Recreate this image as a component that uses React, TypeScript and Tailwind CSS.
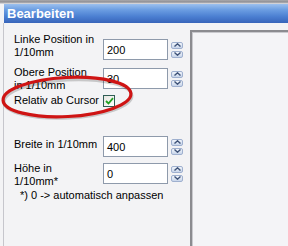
import React from "react";

function Spin() {
  return (
    <div className="ml-[3px] flex flex-col gap-[2px]">
      {["up", "down"].map((dir) => (
        <div
          key={dir}
          className="w-[12px] h-[7px] rounded-[2px] border border-[#9fb0cf] bg-linear-to-b from-[#f1f5fb] to-[#c8d5ea] flex items-center justify-center"
        >
          <svg width="7" height="4" viewBox="0 0 7 4">
            {dir === "up" ? (
              <path d="M0.5 3.5 L3.5 0.8 L6.5 3.5" fill="none" stroke="#3f5378" strokeWidth="1.4" />
            ) : (
              <path d="M0.5 0.5 L3.5 3.2 L6.5 0.5" fill="none" stroke="#3f5378" strokeWidth="1.4" />
            )}
          </svg>
        </div>
      ))}
    </div>
  );
}

function Field({ value }: { value: string }) {
  return (
    <div className="flex items-center">
      <div className="w-[65px] h-[21px] border border-[#8e9aab] bg-white flex items-center pl-[3px] pt-[1px]">
        {value}
      </div>
      <Spin />
    </div>
  );
}

export default function App() {
  return (
    <div className="relative w-[288px] h-[246px] overflow-hidden bg-[#f3f3f5] font-['Liberation_Sans',Arial,sans-serif] text-[11px] leading-[13px] text-black flex flex-col">
      <div className="h-[4px] bg-linear-to-b from-[#a9a9ad] via-[#8f8f94] to-[#e8e8ec]" />
      <div className="ml-[4px] h-[19px] bg-[linear-gradient(to_bottom,#9cc0ee,#6c9ee2_30%,#4c80d2_65%,#3764ba)] pl-[3px] text-[13px] font-bold text-white leading-[19px]">
        Bearbeiten
      </div>

      <div className="flex flex-1">
        {/* Formular links */}
        <div className="ml-[3px] w-[187px] border-l border-[#c6c6cc] pl-[10px] pt-[10px]">
          <div className="flex items-start">
            <div className="w-[89px]">Linke Position in<br />1/10mm</div>
            <div className="mt-[6px]"><Field value="200" /></div>
          </div>
          <div className="flex items-start mt-[6px]">
            <div className="w-[89px]">Obere Position<br />in 1/10mm</div>
            <div className="mt-[2px]"><Field value="30" /></div>
          </div>
          <div className="flex items-start mt-[2px]">
            <div className="w-[89px]">Relativ ab Cursor</div>
            <div className="mt-[1px] w-[12px] h-[12px] border border-[#2f5d55] bg-linear-to-br from-[#e6e6e0] to-white flex items-center justify-center">
              <svg width="9" height="8" viewBox="0 0 9 8">
                <path d="M1 4 L3.5 6.5 L8 1.2" fill="none" stroke="#21a121" strokeWidth="1.8" />
              </svg>
            </div>
          </div>
          <div className="flex items-start mt-[29px]">
            <div className="w-[89px] mt-[2px]">Breite in 1/10mm</div>
            <Field value="400" />
          </div>
          <div className="flex items-start mt-[5px]">
            <div className="w-[89px]">Höhe in<br />1/10mm*</div>
            <div className="mt-[1px]"><Field value="0" /></div>
          </div>
          <div className="mt-[1px] pl-[6px]">*) 0 -&gt; automatisch anpassen</div>
        </div>

        {/* Vorschau rechts */}
        <div className="mt-[7px] flex-1 border-l-2 border-t-2 border-[#8b8b90] bg-[#f4f4f7] shadow-[inset_1px_1px_0_#c9c9ce]" />
      </div>

      {/* rote Markierung */}
      <svg className="absolute left-0 top-0 pointer-events-none" width="288" height="246">
        <ellipse cx="68" cy="99" rx="64" ry="19" transform="rotate(-3 68 99)" fill="none" stroke="#000" strokeOpacity="0.18" strokeWidth="3" />
        <ellipse cx="67" cy="97" rx="64" ry="19.5" transform="rotate(-3 67 97)" fill="none" stroke="#cf1414" strokeWidth="3.2" />
      </svg>
    </div>
  );
}
